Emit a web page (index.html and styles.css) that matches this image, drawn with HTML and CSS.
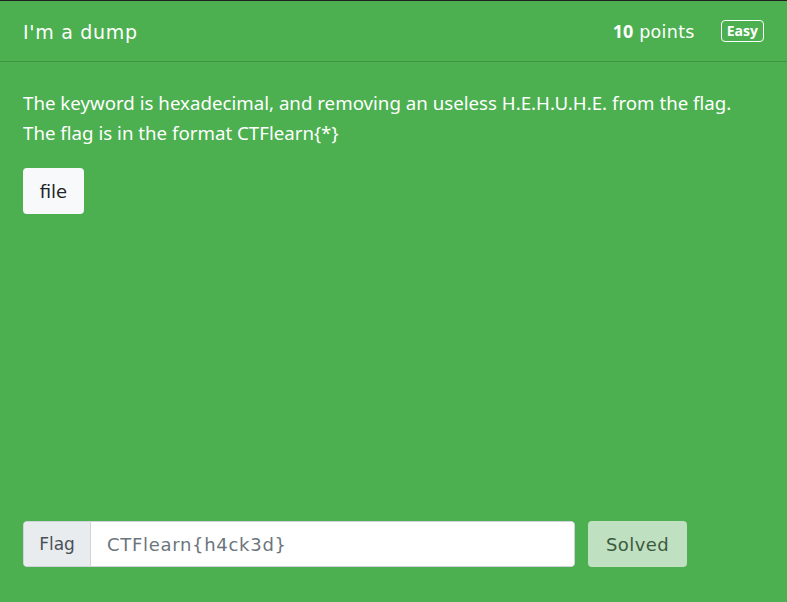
FILE: index.html
```html
<!DOCTYPE html>
<html>
<head>
<meta charset="utf-8">
<link rel="stylesheet" href="styles.css">
</head>
<body>
<div class="card">
  <div class="card-header">
    <div class="title">I'm a dump</div>
    <div class="meta">
      <span class="points"><b>10</b> points</span>
      <span class="badge">Easy</span>
    </div>
  </div>
  <div class="card-body">
    <p class="desc">The keyword is hexadecimal, and removing an useless H.E.H.U.H.E. from the flag.<br>The flag is in the format CTFlearn{*}</p>
    <div><button class="file-btn">file</button></div>
    <div class="flag-row">
      <div class="input-group">
        <span class="addon">Flag</span>
        <input class="flag-input" type="text" value="CTFlearn{h4ck3d}">
      </div>
      <button class="solved-btn">Solved</button>
    </div>
  </div>
</div>
</body>
</html>
```
FILE: styles.css
```css
html, body {
  margin: 0;
  padding: 0;
  height: 100%;
  background: #4caf50;
}
.card {
  box-sizing: border-box;
  height: 602px;
  background: #4caf50;
  border-top: 1px solid #1f1f1f;
  display: flex;
  flex-direction: column;
  color: #fff;
}
.card-header {
  height: 61px;
  box-sizing: border-box;
  border-bottom: 1px solid #3f9443;
  display: flex;
  align-items: center;
  justify-content: space-between;
  padding: 0 23px 0 23px;
}
.title {
  font-family: "DejaVu Sans", sans-serif;
  font-size: 19px;
  letter-spacing: 0.7px;
  padding-top: 1px;
}
.meta {
  display: flex;
  align-items: center;
}
.points {
  font-family: "DejaVu Sans", sans-serif;
  font-size: 17.5px;
  letter-spacing: 0.3px;
  margin-right: 26px;
}
.points b {
  font-family: "Noto Sans", sans-serif;
  font-size: 18px;
  font-weight: 700;
  letter-spacing: 0;
}
.badge {
  font-family: "Open Sans", sans-serif;
  font-weight: 700;
  font-size: 14px;
  line-height: 19px;
  border: 1.5px solid #fff;
  border-radius: 4px;
  padding: 0 5px 1px;
}
.card-body {
  flex: 1;
  display: flex;
  flex-direction: column;
  padding: 26px 23px 35px;
}
.desc {
  margin: 0;
  font-family: "Noto Sans", sans-serif;
  font-size: 18.7px;
  line-height: 30px;
}
.file-btn {
  margin-top: 20px;
  height: 46px;
  width: 61px;
  padding: 0;
  background: #f8f9fa;
  border: none;
  border-radius: 4px;
  font-family: "DejaVu Sans", sans-serif;
  font-size: 18px;
  color: #212529;
}
.flag-row {
  margin-top: auto;
  display: flex;
  align-items: center;
}
.input-group {
  display: flex;
  width: 552px;
  height: 46px;
  box-sizing: border-box;
  border: 1px solid #ced4da;
  border-radius: 4px;
  overflow: hidden;
  background: #fff;
}
.addon {
  width: 67px;
  box-sizing: border-box;
  display: flex;
  align-items: center;
  justify-content: center;
  background: #e9ecef;
  border-right: 1px solid #ced4da;
  font-family: "DejaVu Sans", sans-serif;
  font-size: 17px;
  color: #495057;
}
.flag-input {
  flex: 1;
  border: none;
  outline: none;
  padding: 0 16px;
  font-family: "DejaVu Sans", sans-serif;
  font-size: 18px;
  letter-spacing: 0.7px;
  color: #6c757d;
  background: #fff;
}
.solved-btn {
  margin-left: 13px;
  width: 99px;
  height: 46px;
  border: none;
  border-radius: 4px;
  background: #bfe0c1;
  font-family: "DejaVu Sans", sans-serif;
  font-size: 18px;
  letter-spacing: 0.4px;
  color: #3d5a3e;
}
```
